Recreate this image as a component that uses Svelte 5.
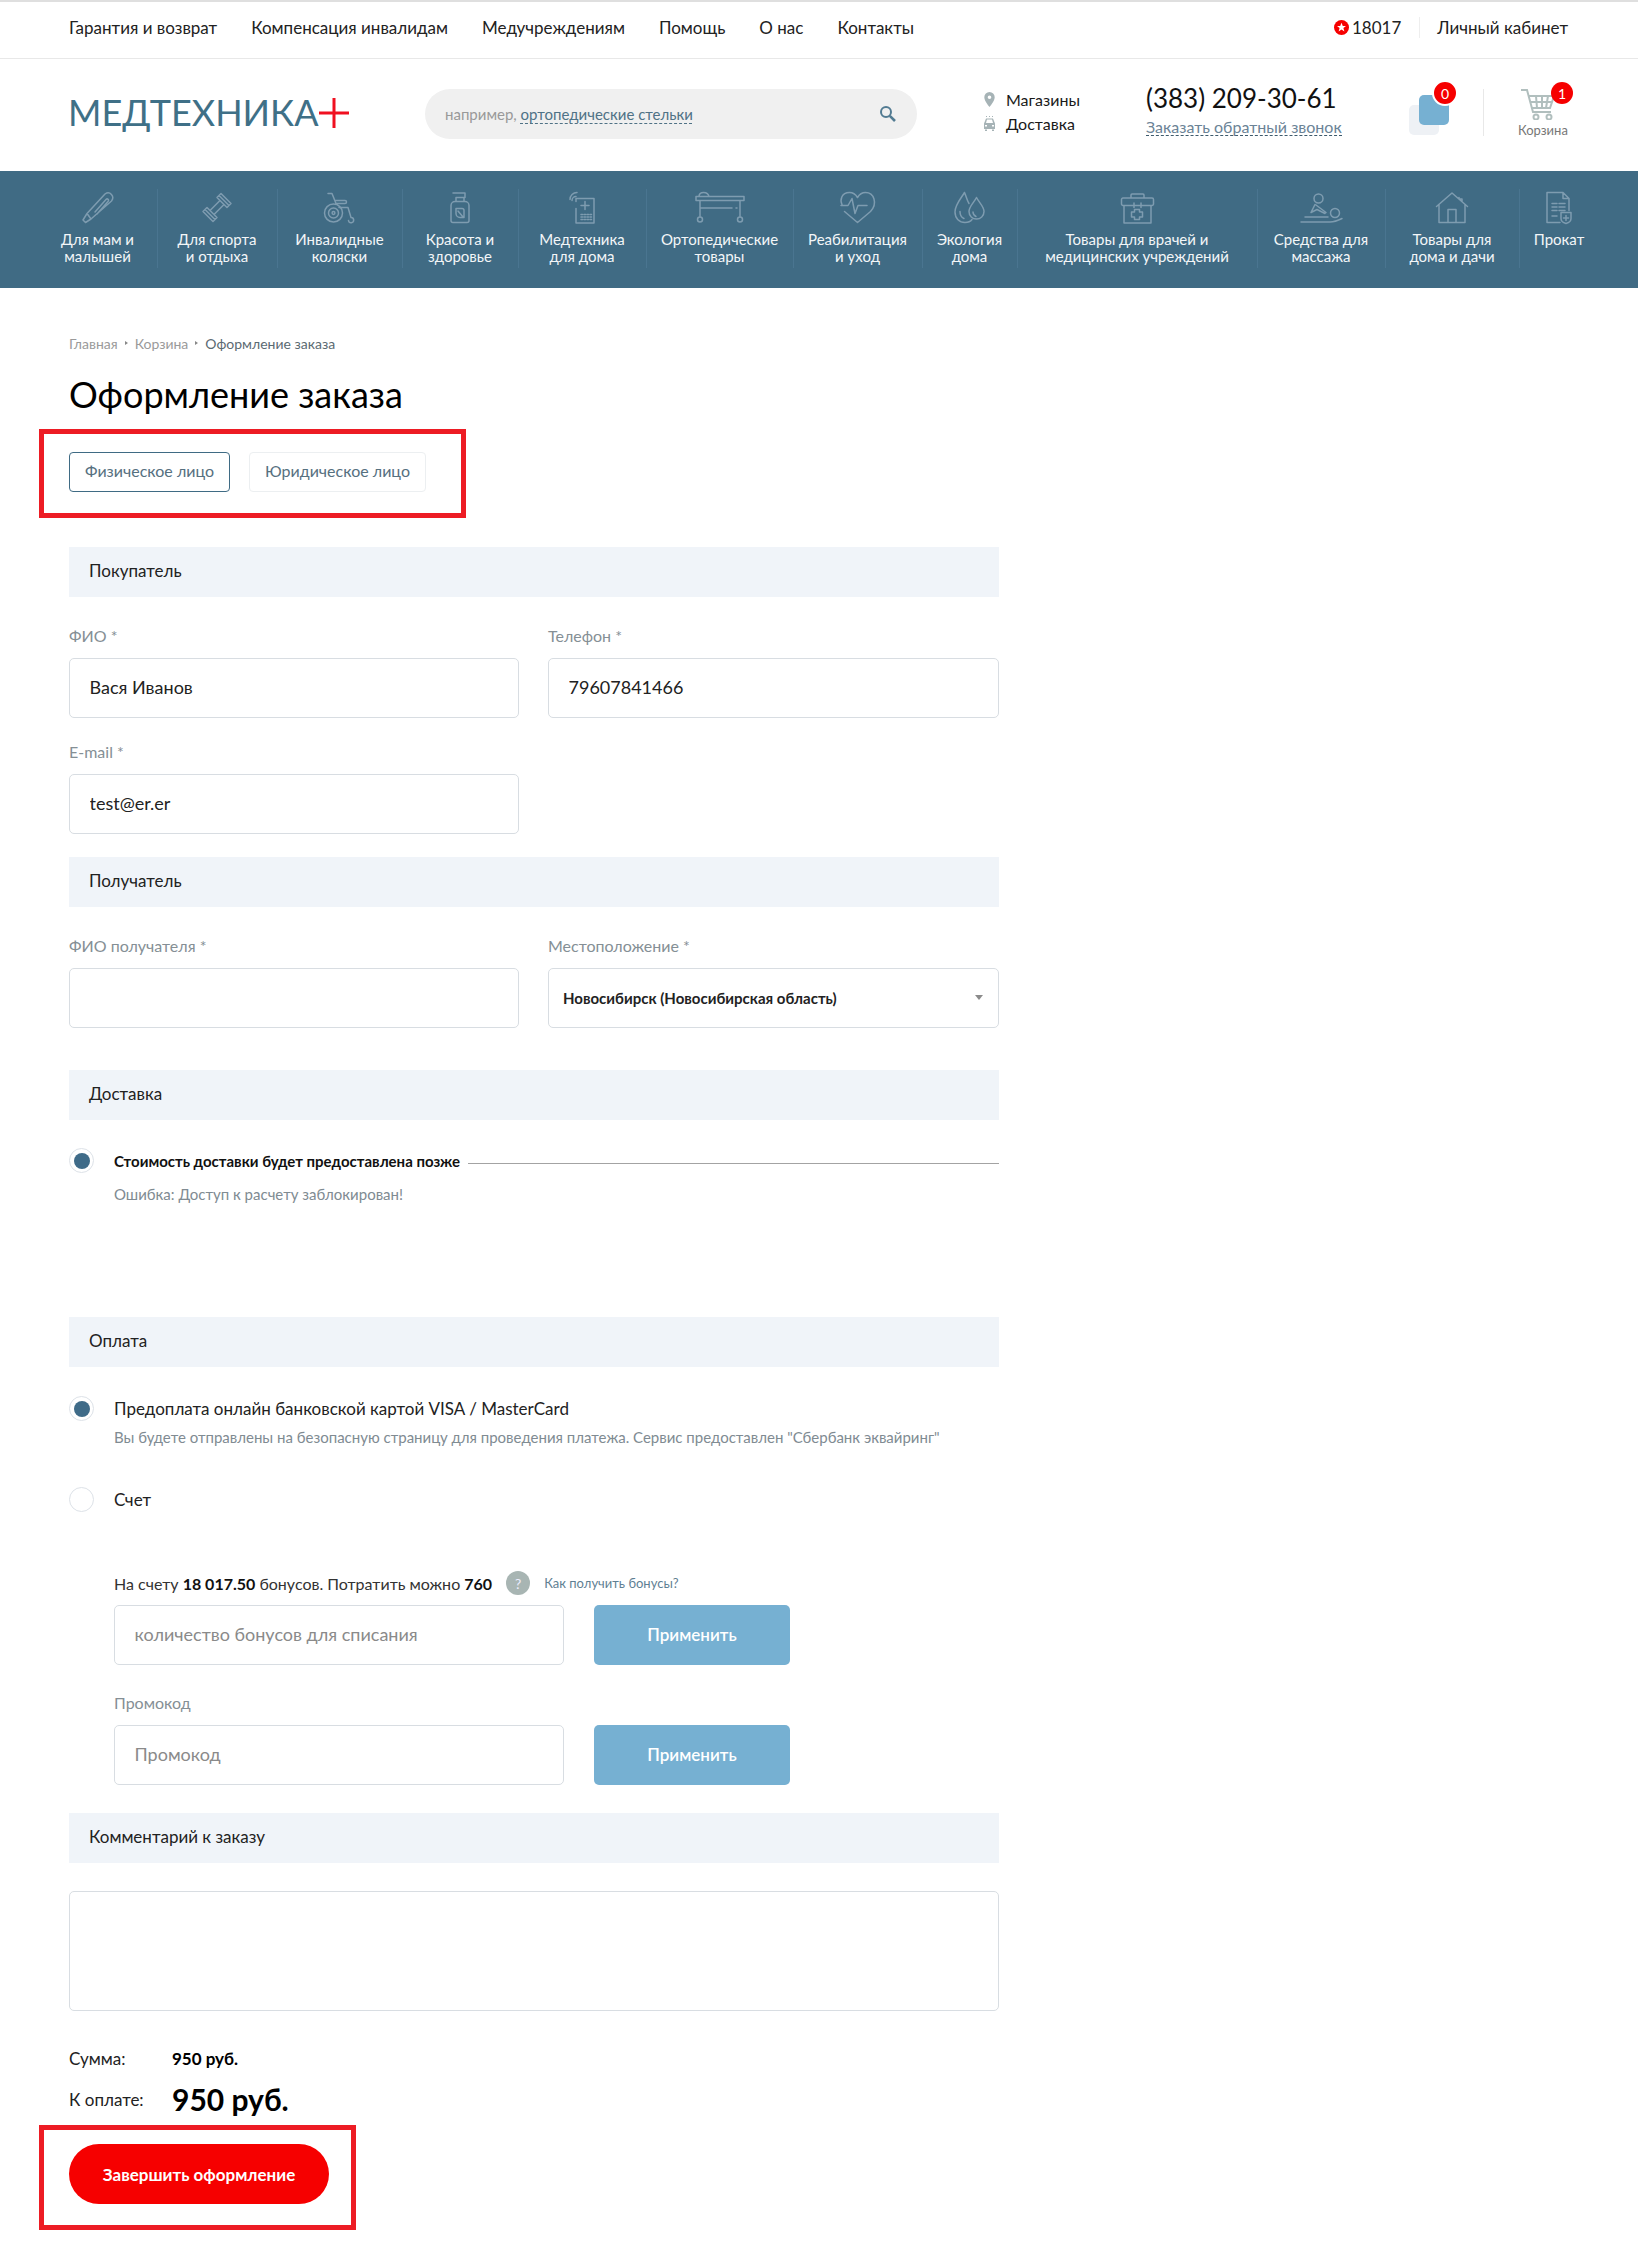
<script>
  const c = (x, y, r) => `M${x - r} ${y}a${r} ${r} 0 1 0 ${2 * r} 0a${r} ${r} 0 1 0 ${-2 * r} 0`;
  const topLinks = ['Гарантия и возврат', 'Компенсация инвалидам', 'Медучреждениям', 'Помощь', 'О нас', 'Контакты'];
  const nav = [
    { w: 118, vw: 32, t: ['Для мам и', 'малышей'], d: 'M1 28.5 3.5 31 9 27.5 29.5 9.5C33 5 28-1 23 2.5L5 22ZM5 22 9 27.5M13 20.5 24 8c1.5-1.5 3.5.5 2 2L15 22.5' },
    { w: 120, vw: 32, t: ['Для спорта', 'и отдыха'], d: 'M9.5 18.5 18.5 9.5M13.5 22.5 22.5 13.5M16 6 20 2 30 12 26 16ZM18 4 28 14M6 16 16 26 12 30 2 20ZM4 18 14 28' },
    { w: 125, vw: 32, t: ['Инвалидные', 'коляски'], d: c(9.5, 21.5, 9) + c(9.5, 21.5, 5) + c(9.5, 21.5, 1.4) + 'M4 2H8L12 12M11 9H21a1.5 1.5 0 0 1 0 3H12M15 16H24L27 26M27 26a2.6 2.6 0 1 1-2.5 3' },
    { w: 116, vw: 20, t: ['Красота и', 'здоровье'], d: 'M1 14a4 4 0 0 1 4-4h10a4 4 0 0 1 4 4v15a2 2 0 0 1-2 2H3a2 2 0 0 1-2-2ZM6 10V6H14V10M3 1.5H15V6M6 17h6a2 2 0 0 1 2 2v7h-4a4 4 0 0 1-4-4ZM8 19.5l5 6' },
    { w: 128, vw: 26, t: ['Медтехника', 'для дома'], d: 'M7 10V7H25V31.5H7V17M16 10v8M12 14h8M12 23h1.5m1.5 0h1.5m1.5 0h1.5m1.5 0h1.5M12 25.5h1.5m1.5 0h1.5m1.5 0h1.5m1.5 0h1.5M12 28h1.5m1.5 0h1.5m1.5 0h1.5m1.5 0h1.5M1 8a7 7 0 0 1 7-7M3 9a4 4 0 0 1 4-4' },
    { w: 147, vw: 50, t: ['Ортопедические', 'товары'], d: 'M1 5H49V9H1ZM4 5C4-.5 13-.5 14 5M5 9V25M45 9V25M5 16.5H37M41 16.5h1' + c(5, 28, 2.5) + c(45, 28, 2.5) },
    { w: 129, vw: 33, t: ['Реабилитация', 'и уход'], d: 'M3.5 20 16.5 31 29.5 20C37 12 33 1 24.5 1 20.5 1 18 3.5 16.5 6 15 3.5 12.5 1 8.5 1 0 1-1 9 1 13M0 14H7L11 7 14 22 17 14H26' },
    { w: 95, vw: 31, t: ['Экология', 'дома'], d: 'M10.5 1C7 7 1 13 1 20.5 1 27 5.5 31 11 31 14 31 16.5 30 18 28M15 12C13 9 12 4 10.5 1M22.5 6C25 11 30 15 30 20 30 24.5 26.5 27.5 22.5 27.5 18.5 27.5 15 24.5 15 20 15 15 20 11 22.5 6ZM6 20C6 23 7.5 26 10 27M19 20.5C19 22 20 24 22 25' },
    { w: 240, vw: 33, t: ['Товары для врачей и', 'медицинских учреждений'], d: 'M10 6.5V3.5A1 1 0 0 1 11 2.5H22a1 1 0 0 1 1 1V6.5M2 6.5H31a1.5 1.5 0 0 1 1.5 1.5V12.5a1.5 1.5 0 0 1-1.5 1.5H2a1.5 1.5 0 0 1-1.5-1.5V8A1.5 1.5 0 0 1 2 6.5ZM3 14V31.5H30V14M13 11.5V16M20 11.5V16M13.5 18h5v2.5h3v5h-3V28h-5v-2.5h-3v-5h3Z' },
    { w: 128, vw: 41, t: ['Средства для', 'массажа'], d: c(17.5, 7, 4.5) + c(34, 21.5, 4.5) + 'M14 13 10 21 16 18 24 22M15 13.5 25 21M4 25.5H27M0 30.5H29C33 30.5 37 29 41 27' },
    { w: 134, vw: 32, t: ['Товары для', 'дома и дачи'], d: 'M.5 15 16 1.5 31.5 15M3 13V31H29V13M12 31V18H20V31M23 6V7.5h3V10' },
    { w: 80, vw: 26, t: ['Прокат'], d: 'M14 31H1V1H17L23 7V19M17 1V7H23M6 12H11M13 12H19M6 15.5H11M13 15.5H19M6 19H11M13 19H19M6 24.5H11M15 21H25V27C25 30 22 31.5 20 32 18 31.5 15 30 15 27ZM20 24v5M17.5 26.5h5' }
  ];
</script>

<div class="page">
  <div class="topbar">
    <div class="toplinks">
      {#each topLinks as l}<span>{l}</span>{/each}
    </div>
    <div class="topright">
      <span class="bonus">
        <svg width="15" height="15" viewBox="0 0 15 15"><circle cx="7.5" cy="7.5" r="7.5" fill="#f60000" /><path d="M7.5 2.8 8.8 6H12L9.4 8 10.4 11.4 7.5 9.4 4.6 11.4 5.6 8 3 6H6.2Z" fill="#fff" /></svg>
        18017
      </span>
      <span class="cabinet">Личный кабинет</span>
    </div>
  </div>

  <header class="header">
    <div class="logo">
      <span>МЕДТЕХНИКА</span>
      <svg class="plus" width="30" height="30" viewBox="0 0 30 30"><path d="M0 15H30M15 0V30" stroke="#f01020" stroke-width="3" /></svg>
    </div>
    <div class="search">
      <span class="hint">например, <u>ортопедические стельки</u></span>
      <svg width="18" height="18" viewBox="0 0 18 18" fill="none" stroke="#527b92" stroke-width="2"><circle cx="7" cy="7" r="5" /><path d="M10.8 10.8 16 16" stroke-width="2.6" /></svg>
    </div>
    <div class="places">
      <div class="place">
        <svg width="11" height="15" viewBox="0 0 11 15"><path fill-rule="evenodd" d="M5.5 0A5.2 5.2 0 0 0 .3 5.2C.3 9 5.5 15 5.5 15s5.2-6 5.2-9.8A5.2 5.2 0 0 0 5.5 0Zm0 7a1.8 1.8 0 1 1 0-3.6 1.8 1.8 0 0 1 0 3.6Z" fill="#a6b3b6" /></svg>
        <span>Магазины</span>
      </div>
      <div class="place">
        <svg width="11" height="15" viewBox="0 0 11 15" fill="#a6b3b6"><path fill-rule="evenodd" d="M2 0h1v1H2ZM5 0h1v1H5ZM8 0h1v1H8ZM2 2.500h7L11 7.500V13H0V7.500ZM3 3.500 2 7H9L8 3.500ZM1 9v1.500H3V9ZM8 9v1.500h2V9ZM1 13.500h2V15H1ZM8 13.500h2V15H8Z" /></svg>
        <span>Доставка</span>
      </div>
    </div>
    <div class="phone">
      <div class="num">(383) 209-30-61</div>
      <div class="call">Заказать обратный звонок</div>
    </div>
    <div class="compare">
      <i class="sq back"></i>
      <i class="sq front"></i>
      <b class="badge">0</b>
    </div>
    <div class="cart">
      <svg width="34" height="31" viewBox="0 0 34 31" fill="none" stroke="#b1bfbe" stroke-width="2"><path d="M0 1H6L12 23H30M8 7H33L29 19H11M9 13H31M15 7 16 19M21 7V19M27 7 25 19" /><circle cx="15" cy="28" r="2.500" /><circle cx="28" cy="28" r="2.500" /></svg>
      <b class="badge">1</b>
      <span>Корзина</span>
    </div>
  </header>

  <nav class="nav">
    {#each nav as n, i}
      <div class="navitem" class:sep={i > 0} style="width:{n.w}px">
        <svg height="33" width={n.vw} viewBox="0 -.5 {n.vw} 33" fill="none" stroke="#7e9cb0" stroke-width="1.5" stroke-linejoin="round" stroke-linecap="round"><path d={n.d} /></svg>
        <div class="navtext">{#each n.t as line}<div>{line}</div>{/each}</div>
      </div>
    {/each}
  </nav>

  <main class="main">
    <div class="crumbs">
      <span>Главная</span><em></em><span>Корзина</span><em></em><span class="cur">Оформление заказа</span>
    </div>
    <h1>Оформление заказа</h1>

    <div class="tabs marked">
      <button class="tab active">Физическое лицо</button>
      <button class="tab">Юридическое лицо</button>
    </div>

    <section class="head first">Покупатель</section>
    <div class="grid">
      <div class="field"><label for="a">ФИО *</label><input id="a" value="Вася Иванов" /></div>
      <div class="field"><label for="b">Телефон *</label><input id="b" value="79607841466" /></div>
      <div class="field"><label for="e">E-mail *</label><input id="e" value="test@er.er" /></div>
    </div>

    <section class="head recv">Получатель</section>
    <div class="grid">
      <div class="field"><label for="r">ФИО получателя *</label><input id="r" /></div>
      <div class="field">
        <span class="lbl">Местоположение *</span>
        <div class="select"><span>Новосибирск (Новосибирская область)</span><i></i></div>
      </div>
    </div>

    <section class="head deliv">Доставка</section>
    <div class="radio strong">
      <i class="dot on"></i>
      <b>Стоимость доставки будет предоставлена позже</b>
      <span class="rule"></span>
    </div>
    <p class="muted err">Ошибка: Доступ к расчету заблокирован!</p>

    <section class="head pay">Оплата</section>
    <div class="radio online"><i class="dot on"></i><span>Предоплата онлайн банковской картой VISA / MasterCard</span></div>
    <p class="muted desc">Вы будете отправлены на безопасную страницу для проведения платежа. Сервис предоставлен "Сбербанк эквайринг"</p>
    <div class="radio acct"><i class="dot"></i><span>Счет</span></div>

    <div class="bonus-box">
      <div class="bonusline">
        <span>На счету <b>18 017.50</b> бонусов. Потратить можно <b>760</b></span>
        <i class="q">?</i>
        <a href="#top">Как получить бонусы?</a>
      </div>
      <div class="applyrow">
        <input placeholder="количество бонусов для списания" />
        <button class="apply">Применить</button>
      </div>
      <div class="lbl promo">Промокод</div>
      <div class="applyrow">
        <input placeholder="Промокод" />
        <button class="apply">Применить</button>
      </div>
    </div>

    <section class="head comment">Комментарий к заказу</section>
    <textarea></textarea>

    <div class="sum"><span>Сумма:</span><b>950 руб.</b></div>
    <div class="sum total"><span>К оплате:</span><b>950 руб.</b></div>

    <div class="finish marked">
      <button class="go">Завершить оформление</button>
    </div>
  </main>
</div>

<style>
  :global(body) { margin: 0; background: #fff; }
  .page { font-family: Lato, "Noto Sans", sans-serif; color: #1a1a1a; width: 1638px; padding-bottom: 48px; }
  * { box-sizing: border-box; }

  .topbar { height: 59px; display: flex; justify-content: space-between; align-items: center; padding: 0 70px 5px 69px; border-top: 2px solid #dfdfdf; border-bottom: 1px solid #e8e8e8; font-size: 17px; color: #222; }
  .toplinks { display: flex; gap: 34px; }
  .topright { display: flex; align-items: center; }
  .bonus { display: flex; align-items: center; gap: 3px; padding-right: 18px; border-right: 1px solid #eee; }
  .cabinet { padding-left: 17px; }

  .header { height: 112px; display: flex; align-items: flex-start; padding-left: 69px; }
  .logo { width: 356px; margin-top: 33px; display: flex; align-items: center; color: #3f7087; font-size: 36px; line-height: 40px; }
  .logo span { margin-left: -1px; }
  .plus { margin: 2px 0 0 0; }
  .search { width: 492px; height: 50px; margin-top: 30px; border-radius: 25px; background: #f0f0f0; display: flex; align-items: center; justify-content: space-between; padding: 0 20px; }
  .hint { font-size: 15px; color: #999; }
  .hint u { color: #4f7286; text-decoration: underline dashed 1px; text-underline-offset: 3px; }
  .places { width: 162px; margin: 28px 0 0 67px; font-size: 16px; }
  .place { display: flex; align-items: center; gap: 11px; height: 24px; }
  .phone { width: 263px; margin-top: 24px; }
  .num { font-size: 26px; line-height: 30px; color: #111; }
  .call { display: inline-block; margin-top: 5px; font-size: 16px; line-height: 17px; color: #6b8396; border-bottom: 1px dashed #3d5a6c; }
  .compare { position: relative; width: 74px; height: 46px; margin-top: 36px; }
  .sq { position: absolute; width: 30px; height: 30px; border-radius: 5px; }
  .back { left: 0; top: 10px; background: #eef1f5; }
  .front { left: 10px; top: 0; background: #76b0d2; }
  .badge { position: absolute; width: 22px; height: 22px; border-radius: 50%; background: #f60000; color: #fff; font-size: 14px; font-weight: 400; display: flex; align-items: center; justify-content: center; box-sizing: content-box; }
  .compare .badge { left: 23px; top: -15px; border: 2px solid #fff; }
  .cart { position: relative; width: 100px; height: 47px; margin-top: 30px; border-left: 1px solid #e8e8e8; padding-left: 37px; font-size: 13px; color: #777; }
  .cart svg { display: block; }
  .cart .badge { left: 67px; top: -7px; }
  .cart span { display: block; margin-left: -3px; margin-top: 2px; }

  .nav { height: 117px; background: #406b84; display: flex; padding: 18px 0 0 38.5px; }
  .navitem { height: 79px; display: flex; flex-direction: column; align-items: center; color: #f3f6f8; }
  .sep { border-left: 1px solid #4a7590; }
  .navitem svg { overflow: visible; margin-top: 2px; }
  .navtext { margin-top: 7px; font-size: 15px; line-height: 16.5px; text-align: center; white-space: nowrap; }

  .main { width: 930px; margin-left: 69px; }
  .crumbs { margin-top: 47px; height: 16px; display: flex; align-items: center; font-size: 14px; color: #9a9a9a; }
  .crumbs em { width: 0; height: 0; margin: 0 7px; border-left: 3px solid #888; border-top: 2.500px solid transparent; border-bottom: 2.500px solid transparent; }
  .cur { color: #5b6a72; }
  h1 { margin: 21px 0 0; font-size: 36px; line-height: 44px; font-weight: 400; color: #000; }

  .marked { position: relative; }
  .marked::after { content: ""; position: absolute; box-sizing: border-box; border: 5px solid #ed1c24; pointer-events: none; }
  .tabs { display: flex; gap: 19px; margin-top: 36px; height: 40px; }
  .tabs::after { left: -30px; top: -23px; width: 427px; height: 89px; }
  .tab { font: 16px Lato, sans-serif; color: #56707f; background: #fff; border: 1px solid #eceff1; border-radius: 4px; padding: 0 15px 3px; height: 40px; }
  .tab.active { border-color: #3f6b84; }

  .head { height: 50px; background: #f0f4f9; padding: 0 20px 3px; display: flex; align-items: center; font-size: 17px; color: #222; }
  .first { margin-top: 55px; }
  .recv { margin-top: 23px; }
  .deliv { margin-top: 42px; }
  .pay { margin-top: 113px; }
  .comment { margin-top: 28px; }

  .grid { display: grid; grid-template-columns: 450px 451px; column-gap: 29px; row-gap: 25px; margin-top: 30px; }
  label, .lbl { display: block; height: 20px; line-height: 18px; margin-bottom: 11px; font-size: 16px; color: #858f95; }
  input { display: block; width: 100%; height: 60px; padding: 0 19.5px 3px; border: 1px solid #d8dde2; border-radius: 5px; font: 18px Lato, sans-serif; color: #222; background: #fff; outline: none; }
  input::placeholder { color: #8a8a8a; opacity: 1; }
  .select { height: 60px; border: 1px solid #d8dde2; border-radius: 5px; display: flex; align-items: center; justify-content: space-between; padding: 0 15px 1px 14px; font-size: 15px; font-weight: 700; color: #222; }
  .select i { border-top: 5px solid #8b8b8b; border-left: 4px solid transparent; border-right: 4px solid transparent; }

  .radio { display: flex; align-items: center; gap: 20px; height: 25px; margin-top: 27px; font-size: 17px; color: #222; }
  .radio.strong { margin-top: 28px; font-size: 15px; }
  .radio.online { margin-top: 29px; }
  .radio b { color: #111; white-space: nowrap; margin-right: -12px; }
  .rule { flex: 1; align-self: flex-start; margin-top: 15px; height: 1px; background: #a3a3a3; }
  .dot { width: 25px; height: 25px; flex: none; border-radius: 50%; background: #fff; border: 1px solid #dde2e8; display: flex; align-items: center; justify-content: center; }
  .dot.on::before { content: ""; width: 16px; height: 16px; border-radius: 50%; background: #3f6b88; }
  .muted { margin: 0 0 0 45px; font-size: 15px; line-height: 20px; color: #808b92; }
  .err { margin-top: 11px; }
  .desc { margin-top: 6px; }
  .radio.acct { margin-top: 40px; }

  .bonus-box { padding-left: 45px; }
  .bonusline { display: flex; align-items: center; height: 24px; margin-top: 59px; font-size: 16px; color: #333; }
  .bonusline b { font-weight: 700; color: #111; }
  .q { width: 24px; height: 24px; border-radius: 50%; background: #a8b5b3; color: #eef; font-style: normal; font-size: 14px; display: flex; align-items: center; justify-content: center; margin: 0 14px 0 14px; }
  .bonusline a { font-size: 13px; color: #5f7f93; text-decoration: none; }
  .applyrow { display: flex; gap: 30px; margin-top: 10px; }
  .applyrow input { width: 450px; }
  .promo + .applyrow { margin-top: 0; }
  .promo { margin-top: 29px; height: 20px; }
  .apply { width: 196px; height: 60px; padding-bottom: 2px; border: 0; border-radius: 5px; background: #76b0d2; color: #fff; font: 600 17px Lato, sans-serif; }

  textarea { display: block; width: 930px; height: 120px; margin-top: 28px; border: 1px solid #d8dde2; border-radius: 5px; resize: none; outline: none; }

  .sum { display: flex; align-items: center; height: 24px; margin-top: 35px; font-size: 17px; color: #222; }
  .sum span { width: 103px; }
  .sum b { font-weight: 700; color: #000; }
  .total { margin-top: 17px; }
  .total b { font-size: 30px; }

  .finish { margin-top: 33px; }
  .finish::after { left: -30px; top: -19px; width: 317px; height: 105px; }
  .go { display: block; width: 260px; height: 60px; padding-bottom: 1px; border: 0; border-radius: 30px; background: #f60000; color: #fff; font: 700 17px Lato, sans-serif; }
</style>
